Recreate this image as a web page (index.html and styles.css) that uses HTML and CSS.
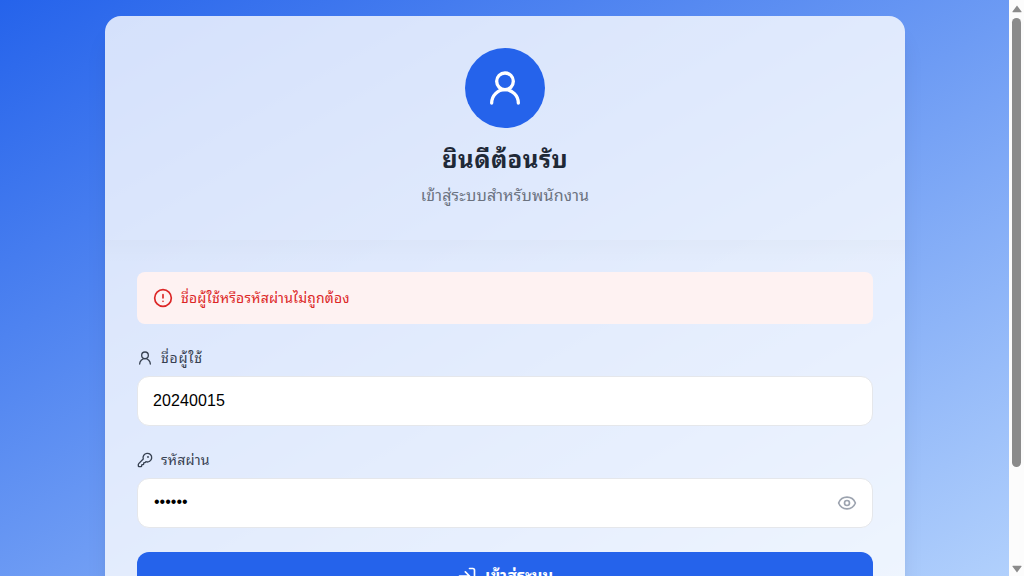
FILE: index.html
```html
<!DOCTYPE html>
<html lang="th">
<head>
<meta charset="utf-8">
<title>เข้าสู่ระบบ</title>
<link rel="stylesheet" href="styles.css">
</head>
<body>
<div class="window">
  <main class="page">
    <section class="card">
      <header class="card-header">
        <div class="avatar">
          <svg class="icon" width="40" height="40" viewBox="0 0 24 24"><circle cx="12" cy="8" r="5"/><path d="M20 21a8 8 0 0 0-16 0"/></svg>
        </div>
        <h1 class="title">ยินดีต้อนรับ</h1>
        <p class="subtitle">เข้าสู่ระบบสำหรับพนักงาน</p>
      </header>
      <form class="form">
        <div class="alert">
          <svg class="icon" width="20" height="20" viewBox="0 0 24 24"><circle cx="12" cy="12" r="10"/><path d="M12 8v4M12 16h.01"/></svg>
          <span class="alert-text">ชื่อผู้ใช้หรือรหัสผ่านไม่ถูกต้อง</span>
        </div>
        <div class="field">
          <label class="label" for="user">
            <svg class="icon" width="16" height="16" viewBox="0 0 24 24"><circle cx="12" cy="8" r="5"/><path d="M20 21a8 8 0 0 0-16 0"/></svg>
            <span class="label-user">ชื่อผู้ใช้</span>
          </label>
          <input class="input" id="user" type="text" value="20240015">
        </div>
        <div class="field">
          <label class="label" for="pass">
            <svg class="icon" width="16" height="16" viewBox="0 0 24 24"><path d="M2.586 17.414A2 2 0 0 0 2 18.828V21a1 1 0 0 0 1 1h3a1 1 0 0 0 1-1v-1a1 1 0 0 1 1-1h1a1 1 0 0 0 1-1v-1a1 1 0 0 1 1-1h.172a2 2 0 0 0 1.414-.586l.814-.814a6.5 6.5 0 1 0-4-4z"/><circle cx="16.5" cy="7.5" r=".5"/></svg>
            <span class="label-pass">รหัสผ่าน</span>
          </label>
          <div class="password">
            <input class="input input-password" id="pass" type="password" value="123456">
            <button class="reveal" type="button" aria-label="แสดงรหัสผ่าน">
              <svg class="icon" width="20" height="20" viewBox="0 0 24 24"><path d="M2.062 12.348a1 1 0 0 1 0-.696 10.75 10.75 0 0 1 19.876 0 1 1 0 0 1 0 .696 10.75 10.75 0 0 1-19.876 0"/><circle cx="12" cy="12" r="3"/></svg>
            </button>
          </div>
        </div>
        <button class="submit" type="button">
          <svg class="icon" width="20" height="20" viewBox="0 0 24 24"><path d="M15 3h4a2 2 0 0 1 2 2v14a2 2 0 0 1-2 2h-4M10 17l5-5-5-5M15 12H3"/></svg>
          <span>เข้าสู่ระบบ</span>
        </button>
      </form>
    </section>
  </main>
  <div class="scrollbar">
    <svg class="arrow" width="10" height="8" viewBox="0 0 10 8"><path d="M5 .5 9.5 6.5a.5.5 0 0 1-.4.8H.9a.5.5 0 0 1-.4-.8z"/></svg>
    <div class="thumb"></div>
    <svg class="arrow arrow-down" width="10" height="8" viewBox="0 0 10 8"><path d="M5 7.5.5 1.500A.5.5 0 0 1 .9.7h8.200a.5.5 0 0 1 .4.800z"/></svg>
  </div>
</div>
</body>
</html>
```
FILE: styles.css
```css
* { box-sizing: border-box; }
body {
  margin: 0;
  height: 576px;
  overflow: hidden;
  font-family: "Liberation Sans", "Noto Sans Thai Looped", Loma, Waree, "Noto Sans Thai", "Noto Sans", sans-serif;
}
.window { display: flex; height: 576px; overflow: hidden; }
.page {
  flex: 1;
  height: 693px;
  padding: 16px 104px 16px 105px;
  background: linear-gradient(150deg, #2563eb, #bfdbfe);
}
.card {
  height: 661px;
  border-radius: 16px;
  background: rgba(255, 255, 255, .8);
  box-shadow: 0 20px 25px -5px rgba(0, 0, 0, .1), 0 8px 10px -6px rgba(0, 0, 0, .1);
}
.card-header {
  height: 224px;
  padding-top: 32px;
  display: flex;
  flex-direction: column;
  align-items: center;
}
.icon {
  flex: none;
  display: block;
  fill: none;
  stroke: currentColor;
  stroke-width: 2;
  stroke-linecap: round;
  stroke-linejoin: round;
}
.avatar {
  width: 80px;
  height: 80px;
  border-radius: 50%;
  display: grid;
  place-items: center;
  background: #2563eb;
  color: #fff;
}
.title { margin: 16px 0 0; font-size: 24px; line-height: 32px; font-weight: 700; letter-spacing: .45px; color: #1f2937; white-space: nowrap; }
.subtitle { margin: 8px 0 0; font-size: 16px; line-height: 24px; letter-spacing: .18px; color: #6b7280; white-space: nowrap; }
.form {
  padding: 32px;
  background: linear-gradient(rgba(0, 0, 0, .015), transparent 24px);
}
.alert {
  height: 52px;
  padding: 0 16px;
  display: flex;
  align-items: center;
  gap: 8px;
  border-radius: 8px;
  background: #fef2f2;
  color: #dc2626;
  font-size: 14px;
  line-height: 20px;
}
.alert-text { letter-spacing: .18px; }
.field { margin-top: 24px; }
.label {
  display: flex;
  align-items: center;
  gap: 8px;
  height: 20px;
  margin-bottom: 8px;
  color: #374151;
  font-size: 14px;
  line-height: 20px;
}
.label-user { letter-spacing: .75px; }
.label-pass { letter-spacing: .2px; }
.input {
  display: block;
  width: 100%;
  height: 50px;
  padding: 0 15px;
  border: 1px solid #e5e7eb;
  border-radius: 12px;
  background: #fff;
  color: #000;
  font: 16px/24px "Liberation Sans", sans-serif;
  letter-spacing: .1px;
  outline: none;
}
.input-password { padding: 0 16px 2px; letter-spacing: 0; }
.password { position: relative; }
.reveal {
  position: absolute;
  top: 15px;
  right: 16px;
  padding: 0;
  border: 0;
  background: none;
  color: #9ca3af;
}
.submit {
  width: 100%;
  height: 48px;
  margin-top: 24px;
  padding: 0;
  display: flex;
  align-items: center;
  justify-content: center;
  gap: 8px;
  border: 0;
  border-radius: 12px;
  background: #2563eb;
  color: #fff;
  font: 700 16px/24px "Liberation Sans", "Noto Sans Thai Looped", Loma, Waree, "Noto Sans Thai", "Noto Sans", sans-serif;
}
.scrollbar {
  width: 15px;
  height: 576px;
  padding: 5px 0 3px;
  display: flex;
  flex-direction: column;
  align-items: center;
  background: #fcfcfc;
}
.arrow { display: block; fill: #8b8b8b; }
.thumb { width: 9px; height: 449px; margin-top: 5px; border-radius: 5px; background: #8b8b8b; }
.arrow-down { margin-top: auto; }
```
